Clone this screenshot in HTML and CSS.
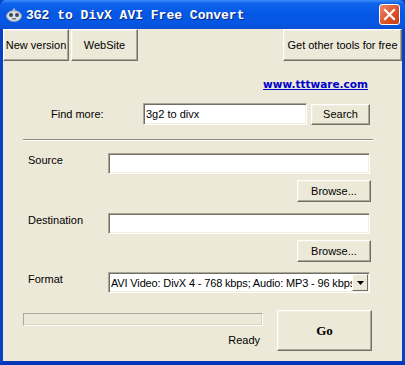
FILE: index.html
```html
<!DOCTYPE html>
<html lang="en">
<head>
    <meta charset="UTF-8">
    <title>3G2 to DivX AVI Free Convert</title>
    <link rel="stylesheet" href="styles.css">
</head>
<body>
    <div class="window">
        <div class="titlebar">
            <svg class="app-icon" width="16" height="14" viewBox="0 0 16 14">
                <ellipse cx="8" cy="8" rx="7.5" ry="5.5" fill="#d8dde6" stroke="#8c97a8" stroke-width="1"/>
                <circle cx="5" cy="7" r="2" fill="#3a4a66"/>
                <circle cx="11" cy="7" r="2" fill="#3a4a66"/>
                <rect x="6" y="10" width="4" height="1.5" fill="#6b7a93"/>
                <rect x="7" y="0.5" width="2" height="3" fill="#b5bdc9"/>
            </svg>
            <span class="title">3G2 to DivX AVI Free Convert</span>
            <button class="close-btn">
                <svg width="13" height="13" viewBox="0 0 13 13">
                    <path d="M2 2 L11 11 M11 2 L2 11" stroke="#fff" stroke-width="2.2" stroke-linecap="square"/>
                </svg>
            </button>
        </div>
        <div class="client">
            <div class="toolbar">
                <button class="btn tool-btn new-btn">New version</button>
                <button class="btn tool-btn site-btn">WebSite</button>
                <button class="btn tool-btn tools-btn">Get other tools for free</button>
            </div>
            <div class="link-row">
                <a href="#" class="site-link">www.tttware.com</a>
            </div>
            <div class="find-row">
                <label class="find-label" for="find-input">Find more:</label>
                <input type="text" id="find-input" class="field find-input" value="3g2 to divx">
                <button class="btn search-btn">Search</button>
            </div>
            <div class="separator"></div>
            <div class="file-row">
                <label class="row-label" for="source-input">Source</label>
                <input type="text" id="source-input" class="field path-input">
            </div>
            <div class="browse-row">
                <button class="btn browse-btn">Browse...</button>
            </div>
            <div class="file-row dest-row">
                <label class="row-label" for="dest-input">Destination</label>
                <input type="text" id="dest-input" class="field path-input">
            </div>
            <div class="browse-row">
                <button class="btn browse-btn">Browse...</button>
            </div>
            <div class="file-row format-row">
                <label class="row-label">Format</label>
                <div class="field select-box">
                    <span class="select-text">AVI Video: DivX 4 - 768 kbps; Audio: MP3 - 96 kbps</span>
                    <span class="select-arrow">
                        <svg width="7" height="4" viewBox="0 0 7 4"><path d="M0 0 H7 L3.5 4 Z" fill="#000"/></svg>
                    </span>
                </div>
            </div>
            <div class="bottom-row">
                <div class="status">
                    <div class="progress"></div>
                    <div class="status-text">Ready</div>
                </div>
                <button class="btn go-btn">Go</button>
            </div>
        </div>
    </div>
</body>
</html>
```

FILE: styles.css
```css
body{
    margin: 0;
    font-family: "Liberation Sans", Arial, sans-serif;
    font-size: 11px;
    background: #ece9d8;
}
.window{
    width: 405px;
    height: 365px;
    box-sizing: border-box;
    background: #0855dd;
    border-left: 3px solid #0842c4;
    border-right: 3px solid #0842c4;
    border-bottom: 4px solid #0036b8;
    display: flex;
    flex-direction: column;
}
.titlebar{
    height: 29px;
    margin: 0 -3px;
    padding: 0 5px 0 6px;
    display: flex;
    align-items: center;
    background: linear-gradient(#3a8cf8 0%, #0e63ea 12%, #0558e6 45%, #0557e3 80%, #0a4fd3 100%);
    border-radius: 6px 6px 0 0;
}
.app-icon{
    margin-right: 4px;
}
.title{
    font-family: "Liberation Mono", "DejaVu Sans Mono", monospace;
    font-weight: bold;
    font-size: 13px;
    color: #fff;
    text-shadow: 1px 1px #0a2a80;
    flex: 1;
    padding-top: 1px;
}
.close-btn{
    width: 21px;
    height: 21px;
    padding: 0;
    border: 1px solid #fff;
    border-radius: 3px;
    background: linear-gradient(135deg, #e88a6c, #dc4f26 60%, #c43d14);
    display: flex;
    align-items: center;
    justify-content: center;
}
.client{
    flex: 1;
    background: #ece9d8;
    padding-left: 20px;
}
.btn{
    font-family: "Liberation Sans", Arial, sans-serif;
    font-size: 11px;
    color: #000;
    background: #ece9d8;
    border: 1px solid;
    border-color: #fff #716f64 #716f64 #fff;
    box-shadow: inset -1px -1px #aca899, inset 1px 1px #f1efe2;
    padding: 0;
    box-sizing: border-box;
}
.toolbar{
    display: flex;
    height: 32px;
    margin-left: -20px;
}
.tool-btn{
    height: 32px;
}
.new-btn{
    width: 66px;
}
.site-btn{
    width: 67px;
    margin-left: 2px;
}
.tools-btn{
    width: 119px;
    margin-left: auto;
}
.link-row{
    margin-top: 17px;
    height: 14px;
    text-align: right;
    padding-right: 34px;
}
.site-link{
    color: #0000cc;
    font-family: "DejaVu Sans", Verdana, sans-serif;
    font-weight: bold;
    font-size: 10.5px;
}
.find-row{
    display: flex;
    align-items: center;
    margin-top: 11px;
    height: 22px;
}
.find-label{
    width: 92px;
    padding-left: 28px;
    box-sizing: border-box;
}
.field{
    box-sizing: border-box;
    background: #fff;
    border: 1px solid;
    border-color: #aca899 #fff #fff #aca899;
    box-shadow: inset 1px 1px #716f64, inset -1px -1px #f1efe2;
    font-family: "Liberation Sans", Arial, sans-serif;
    font-size: 11px;
    padding: 0 2px;
    outline: none;
}
.find-input{
    width: 164px;
    height: 22px;
    margin-left: 28px;
}
.search-btn{
    width: 59px;
    height: 21px;
    margin-left: 4px;
}
.separator{
    width: 350px;
    height: 0;
    margin-top: 14px;
    border-top: 1px solid #8f8b7c;
    border-bottom: 1px solid #fff;
}
.file-row{
    display: flex;
    align-items: flex-start;
    margin-top: 12px;
    height: 21px;
}
.row-label{
    width: 85px;
    padding-left: 5px;
    padding-top: 1px;
    box-sizing: border-box;
}
.path-input{
    width: 262px;
    height: 21px;
}
.browse-row{
    display: flex;
    justify-content: flex-end;
    width: 348px;
    margin-top: 6px;
}
.browse-btn{
    width: 74px;
    height: 22px;
}
.dest-row{
    margin-top: 11px;
}
.format-row{
    margin-top: 10px;
}
.select-box{
    width: 262px;
    height: 21px;
    display: flex;
    align-items: center;
    padding: 0 1px 0 2px;
    overflow: hidden;
}
.select-text{
    flex: 1;
    white-space: nowrap;
    overflow: hidden;
    letter-spacing: -0.15px;
}
.select-arrow{
    width: 16px;
    height: 17px;
    flex-shrink: 0;
    display: flex;
    align-items: center;
    justify-content: center;
    background: #ece9d8;
    border: 1px solid;
    border-color: #fff #716f64 #716f64 #fff;
    box-sizing: border-box;
}
.bottom-row{
    display: flex;
    margin-top: 17px;
}
.status{
    width: 254px;
}
.progress{
    width: 240px;
    height: 13px;
    margin-top: 3px;
    box-sizing: border-box;
    border: 1px solid;
    border-color: #aca899 #fff #fff #aca899;
    box-shadow: inset -1px -1px #d6d3c6;
}
.status-text{
    width: 237px;
    text-align: right;
    margin-top: 8px;
}
.go-btn{
    width: 95px;
    height: 41px;
    font-family: "Liberation Serif", "Times New Roman", serif;
    font-weight: bold;
    font-size: 13px;
}
```
